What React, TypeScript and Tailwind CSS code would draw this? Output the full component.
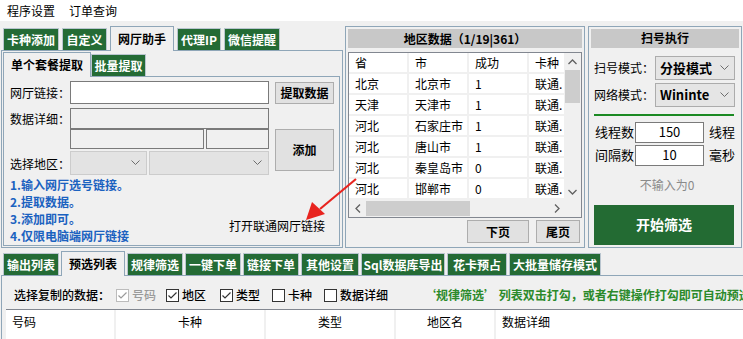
import React from "react";

const FONT = "font-['Noto_Sans_CJK_SC','Noto_Sans',sans-serif]";

function GreenTab({ label, w }: { label: string; w: string }) {
  return (
    <div
      className={`${w} h-[22px] bg-[#246b35] border border-[#b9c5cf] border-b-0 text-white font-bold text-[12px] flex items-center justify-center whitespace-nowrap`}
    >
      {label}
    </div>
  );
}

function ActiveTab({ label, w }: { label: string; w: string }) {
  return (
    <div
      className={`${w} h-[25px] bg-[#f0f0f0] border border-[#8fa6b8] border-b-0 text-black font-bold text-[12px] flex items-center justify-center whitespace-nowrap relative z-10 -mb-px`}
    >
      {label}
    </div>
  );
}

function Chevron({ color = "#6d6d6d" }: { color?: string }) {
  return (
    <svg width="9" height="6" viewBox="0 0 9 6">
      <polyline points="0.5,0.5 4.5,4.5 8.5,0.5" fill="none" stroke={color} strokeWidth="1" />
    </svg>
  );
}

function CheckBox({ checked, disabled, label, ml }: { checked: boolean; disabled?: boolean; label: string; ml: string }) {
  const c = disabled ? "#bcbcbc" : "#333333";
  return (
    <div className={`flex items-center gap-[3px] ${ml}`}>
      <svg width="13" height="13" viewBox="0 0 13 13">
        <rect x="0.5" y="0.5" width="12" height="12" fill="#ffffff" stroke={c} />
        {checked && <polyline points="2.5,6.5 5,9 10.5,3.5" fill="none" stroke={disabled ? "#9a9a9a" : "#333"} strokeWidth="1.2" />}
      </svg>
      <span className={`${disabled ? "text-[#9a9a9a]" : "text-black"} font-medium`}>{label}</span>
    </div>
  );
}

const rows = [
  ["北京", "北京市", "1", "联通."],
  ["天津", "天津市", "1", "联通."],
  ["河北", "石家庄市", "1", "联通."],
  ["河北", "唐山市", "1", "联通."],
  ["河北", "秦皇岛市", "0", "联通."],
  ["河北", "邯郸市", "0", "联通."],
];

export default function App() {
  return (
    <div className={`w-[743px] h-[339px] overflow-hidden bg-[#f0f0f0] relative text-[12px] text-black ${FONT}`}>
      {/* menu */}
      <div className="h-[21px] bg-white flex items-center pl-[7px] gap-[14px]">
        <span>程序设置</span>
        <span>订单查询</span>
      </div>

      {/* top area */}
      <div className="flex h-[232px] pt-[5px]">
        {/* left */}
        <div className="w-[344px] flex flex-col">
          <div className="flex items-end pl-[3px] gap-[3px] h-[24px]">
            <GreenTab label="卡种添加" w="w-[56px]" />
            <GreenTab label="自定义" w="w-[45px]" />
            <ActiveTab label="网厅助手" w="w-[64px]" />
            <GreenTab label="代理IP" w="w-[44px]" />
            <GreenTab label="微信提醒" w="w-[56px]" />
          </div>
          <div className="ml-[1px] w-[342px] h-[198px] border border-[#8fa6b8] pt-[1px] pl-[1px] flex flex-col">
            <div className="flex items-end h-[24px]">
              <ActiveTab label="单个套餐提取" w="w-[88px]" />
              <GreenTab label="批量提取" w="w-[55px]" />
            </div>
            <div className="w-[337px] h-[170px] border border-[#8fa6b8] flex flex-col pl-[6px] pt-[4px]">
              <div className="flex items-center h-[23px]">
                <span className="w-[60px]">网厅链接：</span>
                <div className="w-[199px] h-[23px] bg-white border border-[#7a7a7a]" />
                <button className="ml-[6px] w-[59px] h-[22px] bg-[#e1e1e1] border border-[#adadad] font-bold text-[12px]">提取数据</button>
              </div>
              <div className="flex items-center h-[21px] mt-[4px]">
                <span className="w-[60px]">数据详细：</span>
                <div className="w-[199px] h-[21px] border border-[#7a7a7a]" />
              </div>
              <div className="flex mt-[0px]">
                <div className="flex flex-col">
                  <div className="flex h-[20px] pl-[60px] gap-[2px]">
                    <div className="w-[134px] h-[20px] border border-[#7a7a7a]" />
                    <div className="w-[63px] h-[20px] border border-[#7a7a7a]" />
                  </div>
                  <div className="flex items-center h-[24px] mt-[2px]">
                    <span className="w-[60px] mt-[2px]">选择地区：</span>
                    <div className="w-[77px] h-[24px] bg-[#e3e3e3] border border-[#cccccc] flex items-center justify-end pr-[6px]">
                      <Chevron />
                    </div>
                    <div className="ml-[2px] w-[120px] h-[24px] bg-[#e3e3e3] border border-[#cccccc] flex items-center justify-end pr-[6px]">
                      <Chevron />
                    </div>
                  </div>
                </div>
                <button className="ml-[6px] w-[59px] h-[42px] bg-[#e1e1e1] border border-[#adadad] font-bold text-[12px]">添加</button>
              </div>
              <div className="flex mt-[1px]">
                <div className="flex flex-col font-bold text-[#1b62c0] leading-[17px]">
                  <span>1.输入网厅选号链接。</span>
                  <span>2.提取数据。</span>
                  <span>3.添加即可。</span>
                  <span>4.仅限电脑端网厅链接</span>
                </div>
                <span className="ml-[100px] self-end mb-[9px] text-[12px]">打开联通网厅链接</span>
              </div>
            </div>
          </div>
        </div>

        {/* middle */}
        <div className="ml-[1px] w-[240px] h-[222px] border border-[#8fa6b8] p-[2px] flex flex-col">
          <div className="h-[19px] bg-[#c8c8c8] font-bold flex items-center justify-center">地区数据（1/19|361）</div>
          <div className="mt-[4px] w-[234px] h-[166px] border border-[#828790] bg-white flex flex-col">
            <div className="flex h-[147px]">
              <div className="w-[216px] overflow-hidden flex flex-col">
                <div className="flex h-[24px] border-b-2 border-[#f0f0f0]">
                  {["省", "市", "成功", "卡种"].map((h, i) => (
                    <div key={i} className={`${i < 3 ? "w-[60px] border-r-2 border-[#f0f0f0]" : "w-[40px]"} shrink-0 pl-[6px] flex items-center`}>
                      {h}
                    </div>
                  ))}
                </div>
                {rows.map((r, ri) => (
                  <div key={ri} className="flex h-[21px] shrink-0 border-b-2 border-[#f0f0f0]">
                    {r.map((c, i) => (
                      <div key={i} className={`${i < 3 ? "w-[60px] border-r-2 border-[#f0f0f0]" : "w-[40px]"} shrink-0 pl-[6px] flex items-center whitespace-nowrap overflow-hidden`}>
                        {c}
                      </div>
                    ))}
                  </div>
                ))}
              </div>
              <div className="w-[17px] bg-[#f0f0f0] flex flex-col items-center">
                <div className="h-[17px] flex items-center justify-center">
                  <svg width="9" height="6" viewBox="0 0 9 6"><polyline points="0.5,5 4.5,1 8.5,5" fill="none" stroke="#606060" strokeWidth="1.3" /></svg>
                </div>
                <div className="w-[15px] h-[33px] bg-[#cdcdcd]" />
                <div className="flex-1" />
                <div className="h-[17px] flex items-center justify-center">
                  <svg width="9" height="6" viewBox="0 0 9 6"><polyline points="0.5,1 4.5,5 8.5,1" fill="none" stroke="#606060" strokeWidth="1.3" /></svg>
                </div>
              </div>
            </div>
            <div className="flex h-[17px] bg-[#f0f0f0]">
              <div className="w-[216px] flex items-center">
                <div className="w-[17px] flex items-center justify-center">
                  <svg width="6" height="9" viewBox="0 0 6 9"><polyline points="5,0.5 1,4.5 5,8.5" fill="none" stroke="#606060" strokeWidth="1.3" /></svg>
                </div>
                <div className="w-[104px] h-[15px] bg-[#cdcdcd]" />
                <div className="flex-1" />
                <div className="w-[17px] flex items-center justify-center">
                  <svg width="6" height="9" viewBox="0 0 6 9"><polyline points="1,0.5 5,4.5 1,8.5" fill="none" stroke="#606060" strokeWidth="1.3" /></svg>
                </div>
              </div>
            </div>
          </div>
          <div className="flex justify-end gap-[7px] mt-[2px] pr-[2px]">
            <button className="w-[62px] h-[23px] bg-[#e1e1e1] border border-[#adadad] font-bold">下页</button>
            <button className="w-[44px] h-[23px] bg-[#e1e1e1] border border-[#adadad] font-bold">尾页</button>
          </div>
        </div>

        {/* right */}
        <div className="ml-[3px] w-[154px] h-[222px] border border-[#8fa6b8] p-[2px] flex flex-col">
          <div className="h-[19px] bg-[#c8c8c8] font-bold flex items-center justify-center">扫号执行</div>
          <div className="flex items-center mt-[8px] pl-[3px] h-[24px]">
            <span className="w-[61px] whitespace-nowrap">扫号模式：</span>
            <div className="w-[80px] h-[24px] bg-[#e5e5e5] border border-[#acacac] flex items-center justify-between pl-[4px] pr-[5px] font-bold text-[13px]">
              <span>分投模式</span>
              <Chevron />
            </div>
          </div>
          <div className="flex items-center mt-[3px] pl-[3px] h-[24px]">
            <span className="w-[61px] whitespace-nowrap">网络模式：</span>
            <div className="w-[80px] h-[24px] bg-[#e5e5e5] border border-[#acacac] flex items-center justify-between pl-[4px] pr-[5px] font-bold text-[13px]">
              <span>Wininte</span>
              <Chevron />
            </div>
          </div>
          <div className="ml-[3px] mt-[7px] w-[140px] h-[2px] bg-[#1b8a23]" />
          <div className="flex items-center mt-[6px] pl-[4px] h-[21px] text-[13px]">
            <span className="w-[40px] whitespace-nowrap">线程数</span>
            <div className="w-[69px] h-[21px] bg-white border border-[#7a7a7a] flex items-center justify-center text-[13px]">150</div>
            <span className="ml-[5px]">线程</span>
          </div>
          <div className="flex items-center mt-[2px] pl-[4px] h-[21px] text-[13px]">
            <span className="w-[40px] whitespace-nowrap">间隔数</span>
            <div className="w-[69px] h-[21px] bg-white border border-[#7a7a7a] flex items-center justify-center text-[13px]">10</div>
            <span className="ml-[5px]">毫秒</span>
          </div>
          <div className="mt-[10px] text-center text-[#8a8a8a] pl-[4px]">不输入为0</div>
          <div className="ml-[3px] mt-[11px] w-[140px] h-[41px] bg-[#236b33] text-white font-bold text-[14px] flex items-center justify-center">开始筛选</div>
        </div>
      </div>

      {/* bottom tabs */}
      <div className="flex items-end pl-[3px] gap-[2px] h-[26px] mt-[-4px]">
        <GreenTab label="输出列表" w="w-[56px]" />
        <ActiveTab label="预选列表" w="w-[64px]" />
        <GreenTab label="规律筛选" w="w-[56px]" />
        <GreenTab label="一键下单" w="w-[56px]" />
        <GreenTab label="链接下单" w="w-[56px]" />
        <GreenTab label="其他设置" w="w-[58px]" />
        <GreenTab label="Sql数据库导出" w="w-[84px]" />
        <GreenTab label="花卡预占" w="w-[60px]" />
        <GreenTab label="大批量储存模式" w="w-[92px]" />
      </div>
      <div className="ml-[1px] w-[760px] h-[70px] border border-[#8fa6b8] pt-[9px] pl-[4px]">
        <div className="flex items-center h-[20px] pl-[8px] whitespace-nowrap">
          <span className="font-medium w-[102px]">选择复制的数据：</span>
          <CheckBox checked disabled label="号码" ml="" />
          <CheckBox checked label="地区" ml="ml-[10px]" />
          <CheckBox checked label="类型" ml="ml-[14px]" />
          <CheckBox checked={false} label="卡种" ml="ml-[12px]" />
          <CheckBox checked={false} label="数据详细" ml="ml-[12px]" />
          <span className="ml-[36px] font-bold text-[#2b8a2b]">‘规律筛选’ 列表双击打勾，或者右键操作打勾即可自动预选</span>
        </div>
        <div className="mt-[4px] h-[40px] bg-white border-t border-[#828790] flex">
          <div className="w-[110px] border-r-2 border-[#f0f0f0] pl-[6px] pt-[3px]">号码</div>
          <div className="w-[150px] border-r-2 border-[#f0f0f0] text-center pt-[3px]">卡种</div>
          <div className="w-[130px] border-r-2 border-[#f0f0f0] text-center pt-[3px]">类型</div>
          <div className="w-[100px] border-r-2 border-[#f0f0f0] text-center pt-[3px]">地区名</div>
          <div className="pl-[6px] pt-[3px]">数据详细</div>
        </div>
      </div>

      {/* red arrow overlay */}
      <svg className="absolute left-[300px] top-[176px]" width="62" height="52" viewBox="0 0 62 52">
        <line x1="56" y1="3" x2="20" y2="33" stroke="#e8241f" strokeWidth="2.2" />
        <polygon points="6,44 12,26 25,38" fill="#e8241f" />
      </svg>
    </div>
  );
}
